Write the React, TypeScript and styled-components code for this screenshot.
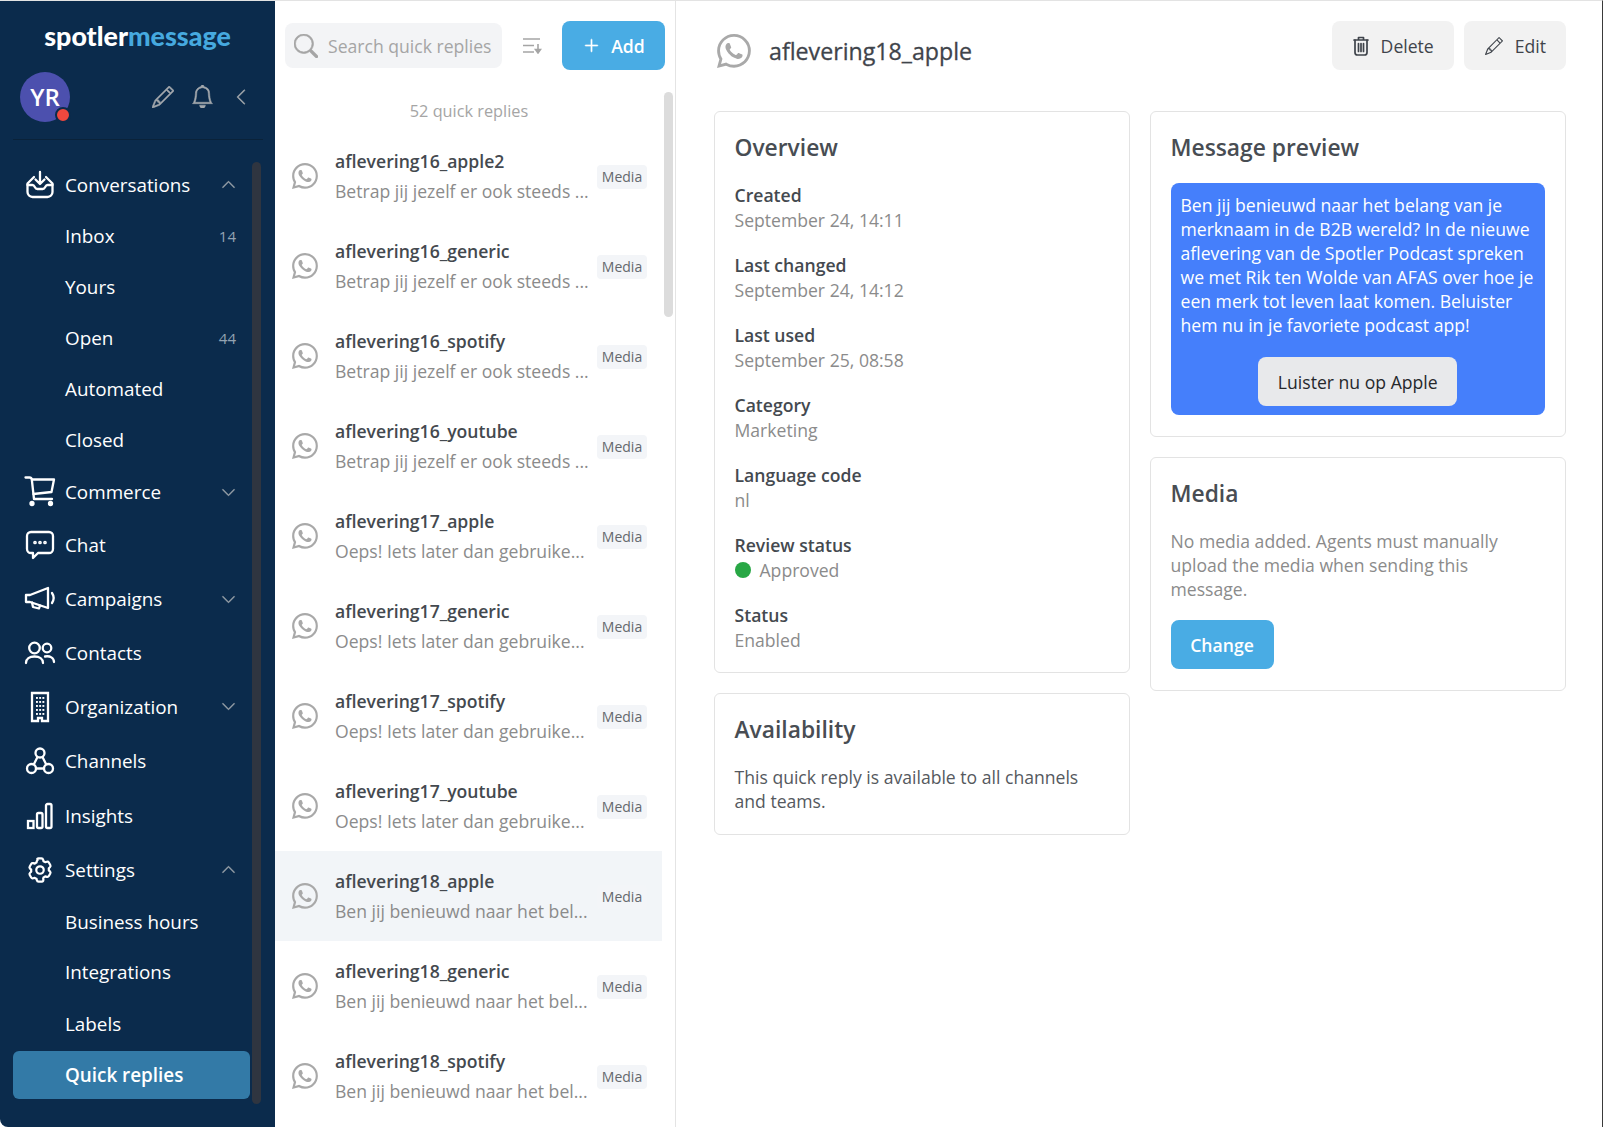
import React from "react";
import styled, { createGlobalStyle } from "styled-components";
import { BsWhatsapp, BsPencil, BsBell, BsChevronLeft, BsChevronUp, BsChevronDown, BsSearch, BsPlusLg } from "react-icons/bs";

const Global = createGlobalStyle`
  html, body { margin: 0; padding: 0; height: 100%; overflow: hidden; background: #fff; }
  body { font-family: "Open Sans", "Noto Sans", sans-serif; font-size: 17.6px; color: #3f444b; }
  * { box-sizing: border-box; }
`;

const Page = styled.div`
  display: flex; width: 1603px; height: 1127px; overflow: hidden;
  border-top: 1px solid #e3e3e3; border-right: 1px solid #3a3a3a; background: #fff;
`;
const Sidebar = styled.aside`
  width: 275px; flex: none; background: #0b2b4c; display: flex; flex-direction: column;
  border-bottom-left-radius: 8px; overflow: hidden; color: #fff;
`;
const Logo = styled.div`
  height: 57px; padding-top: 20px; text-align: center; font-family: "Lato", sans-serif;
  font-weight: 900; font-size: 26.8px; line-height: 30px; letter-spacing: 0;
`;
const LogoAccent = styled.span`color: #46a9df;`;
const UserBar = styled.div`
  display: flex; align-items: center; height: 82px; margin: 0 12px 0 13px; padding: 0 0 4px 7px;
  border-bottom: 1px solid #0a2239; color: #a3a8ad;
`;
const Avatar = styled.div`
  position: relative; width: 50px; height: 50px; border-radius: 50%; background: #4c50ae;
  display: flex; align-items: center; justify-content: center; color: #fff; font-size: 24px; font-weight: 600;
  margin-right: 82px;
`;
const Dot = styled.span`
  position: absolute; right: -1px; bottom: -1px; width: 16px; height: 16px; border-radius: 50%;
  background: #f0483e; border: 2px solid #0b2b4c;
`;
const UserIcons = styled.div`
  display: flex; align-items: center; gap: 17px;
  svg { display: block; stroke: currentColor; stroke-width: 0.35; }
`;
const Back = styled.span`display: flex; margin-left: 1px;`;
const NavArea = styled.div`display: flex; padding: 19.5px 0 0 13px; flex: 1; min-height: 0;`;
const Nav = styled.nav`width: 237px; flex: none; display: flex; flex-direction: column;`;
const Track = styled.div`
  width: 9px; margin: 2.5px 0 0 2px; height: 942px; border-radius: 5px; background: #2f3540; flex: none;
`;
const NavItem = styled.div<{ $h: number; $active?: boolean }>`
  height: ${(p) => p.$h}px; flex: none; display: flex; align-items: center; padding-left: 13px; padding-right: 14px;
  color: #fff; font-size: 18.85px; border-radius: 6px;
  background: ${(p) => (p.$active ? "#337aa7" : "transparent")};
  font-weight: ${(p) => (p.$active ? 600 : 400)};
`;
const NavIcon = styled.span`width: 28px; height: 30px; margin-right: 11px; display: flex; align-items: center; justify-content: center; flex: none; svg { display: block; overflow: visible; }`;
const SubSpacer = styled.span`width: 39px; flex: none;`;
const NavLabel = styled.span`flex: 1; white-space: nowrap;`;
const Count = styled.span`font-size: 15px; color: #93a3b2;`;
const Chevron = styled.span`color: #9aa2aa; display: flex; svg { display: block; stroke: currentColor; stroke-width: 0.5; }`;

const ListPanel = styled.section`
  position: relative; width: 401px; flex: none; border-right: 1px solid #e4e4e4; overflow: hidden;
`;
const ListTop = styled.div`display: flex; align-items: center; height: 69px; padding: 20px 0 0 10px;`;
const Search = styled.div`
  width: 217px; height: 45px; border-radius: 8px; background: #f3f4f6; display: flex; align-items: center;
  padding-left: 9px; color: #a5a5a5; white-space: nowrap;
  svg { flex: none; margin-right: 10px; stroke: currentColor; stroke-width: 0.4; }
`;
const SortBtn = styled.span`width: 60px; display: flex; justify-content: center; color: #a5a5a5; svg { display: block; }`;
const PrimaryBtn = styled.div`
  display: flex; align-items: center; justify-content: center; gap: 12px; height: 49px; border-radius: 8px;
  background: #49ace4; color: #fff; font-weight: 600; font-size: 17.6px;
`;
const AddBtn = styled(PrimaryBtn)`
  width: 103px; gap: 11px; padding-left: 1px;
  svg { stroke: currentColor; stroke-width: 0.6; }
`;
const CountLine = styled.div`text-align: center; color: #a5a5a5; font-size: 16.3px; height: 24px; line-height: 24px; margin: 29px 12px 8px 0;`;
const Row = styled.div<{ $sel?: boolean }>`
  display: flex; align-items: center; height: 90px; width: 387px; padding-left: 17px;
  background: ${(p) => (p.$sel ? "#f2f5f8" : "transparent")};
`;
const RowIcon = styled.span`width: 26px; color: #a9a9a9; margin-right: 17px; flex: none; display: flex; svg { display: block; }`;
const RowText = styled.div`width: 262px; flex: none;`;
const RowTitle = styled.div`font-weight: 600; font-size: 17.6px; line-height: 30px; color: #44494f; white-space: nowrap;`;
const RowSub = styled.div`font-size: 17.6px; line-height: 30px; color: #8b8b8b; white-space: nowrap;`;
const Badge = styled.span`
  background: #f3f5f8; border-radius: 4px; width: 50px; height: 24px; line-height: 24px; text-align: center;
  font-size: 14px; color: #64686d; flex: none; margin-top: 1px;
`;
const Thumb = styled.div`
  position: absolute; left: 389px; top: 91px; width: 9px; height: 225px; background: #dcdcdc; border-radius: 5px;
`;

const Detail = styled.main`flex: 1; min-width: 0; padding: 20px 36px 0 38px;`;
const DetailHead = styled.header`display: flex; align-items: center; height: 49px; margin-bottom: 41px;`;
const HeadIcon = styled.span`color: #a9a9a9; display: flex; margin: 10px 18px 0 3px; svg { display: block; }`;
const HeadTitle = styled.h1`
  flex: 1; margin: 0; padding-top: 10px; font-size: 23.2px; font-weight: 400; color: #3f444b;
  -webkit-text-stroke: 0.3px #3f444b;
`;
const GhostBtn = styled.div`
  display: flex; align-items: center; justify-content: center; gap: 12px; height: 49px; border-radius: 8px;
  background: #f2f2f2; color: #3f444b; margin-left: 10px; padding: 0 20px 0 21px;
  svg { display: block; }
`;
const Columns = styled.div`display: grid; grid-template-columns: 416px 416px; gap: 20px; align-items: start;`;
const Column = styled.div`display: flex; flex-direction: column; gap: 20px;`;
const Card = styled.div`border: 1.5px solid #e3e3e3; border-radius: 6px; padding: 19px 20px 20.5px 19.5px;`;
const CardTitle = styled.h2`margin: 0 0 19px; font-size: 22.8px; font-weight: 600; line-height: 33px; color: #484d53;`;
const Field = styled.div`margin-bottom: 21.5px; &:last-child { margin-bottom: 0; }`;
const Label = styled.div`font-weight: 600; line-height: 24px; margin-bottom: 0.5px; color: #44494f;`;
const Value = styled.div`line-height: 24px; color: #8b8b8b; display: flex; align-items: center;`;
const Green = styled.span`width: 16px; height: 16px; border-radius: 50%; background: #28a745; margin-right: 9px;`;
const Body = styled.p<{ $dark?: boolean }>`
  margin: 0; line-height: 24px; color: ${(p) => (p.$dark ? "#55595e" : "#8b8b8b")};
`;
const Bubble = styled.div`
  background: #457ffb; color: #fff; border-radius: 8px; padding: 10px 10px 9px; line-height: 24px;
  display: flex; flex-direction: column; align-items: center;
`;
const BubbleText = styled.div`width: 100%; margin-bottom: 20px;`;
const BubbleBtn = styled.div`
  width: 199px; height: 49px; border-radius: 8px; background: #e8e9eb; color: #26282b; display: flex;
  align-items: center; justify-content: center;
`;
const ChangeBtn = styled(PrimaryBtn)`width: 103px; margin-top: 19.5px;`;

const S = { fill: "none", stroke: "currentColor", strokeWidth: 2.3, strokeLinecap: "round" as const, strokeLinejoin: "round" as const };

const InboxIcon = () => (
  <svg width="28" height="28" viewBox="0 0 28 28" {...S}>
    <path d="M14 1v12M9.5 8.5 14 13l4.5-4.5" />
    <path d="M8 6 1.5 12.5V21a5 5 0 0 0 5 5h15a5 5 0 0 0 5-5v-8.5L20 6" />
    <path d="M1.5 14h5c1.3 0 1.8 1 2.3 2s1.2 2 2.5 2h5.4c1.3 0 2-1 2.5-2s1-2 2.3-2h5" />
  </svg>
);
const CartIcon = () => (
  <svg width="30" height="30" viewBox="0 0 30 30" {...S}>
    <path d="M0.5 0.5h4q2 0 2.3 2L9 22h18" />
    <path d="M7 2.5h22l-2.5 12.5L8.5 17" />
    <circle cx="7" cy="26.5" r="1.5" fill="currentColor" />
    <circle cx="25.5" cy="26.5" r="1.5" fill="currentColor" />
  </svg>
);
const ChatIcon = () => (
  <svg width="28" height="28" viewBox="0 0 28 28" {...S}>
    <path d="M5 1h18a4 4 0 0 1 4 4v13a4 4 0 0 1-4 4H12l-5 5v-5H5a4 4 0 0 1-4-4V5a4 4 0 0 1 4-4Z" />
    <circle cx="9" cy="11.5" r=".7" fill="currentColor" />
    <circle cx="14" cy="11.5" r=".7" fill="currentColor" />
    <circle cx="19" cy="11.5" r=".7" fill="currentColor" />
  </svg>
);
const MegaIcon = () => (
  <svg width="30" height="24" viewBox="0 0 30 24" {...S}>
    <path d="M1 8h4L23 1v20L5 15H1V8Z" />
    <path d="M7 15.5 8 20l6 1.5 1-3" />
    <path d="M27 6c2 3 2 7 0 10" />
  </svg>
);
const ContactsIcon = () => (
  <svg width="30" height="24" viewBox="0 0 30 24" {...S}>
    <circle cx="9.5" cy="7" r="5.3" />
    <circle cx="22" cy="7" r="4.3" />
    <path d="M1 22c0-4 3.5-6.5 8.5-6.5s8.5 2.5 8.5 6.5" />
    <path d="M20 15.5c5 -1 9 1.5 9 5.5" />
  </svg>
);
const BuildingIcon = () => (
  <svg width="18" height="30" viewBox="0 0 18 30" {...S} strokeLinejoin="miter">
    <path d="M1 1h16v28H11v-3H7v3H1V1Z" />
    <g stroke="none" fill="currentColor">
      {[5, 8.2, 11.4].map((x) => [5, 9, 13, 17, 21].map((y) => <rect key={`${x}-${y}`} x={x} y={y} width="1.9" height="1.9" />))}
    </g>
  </svg>
);
const ChannelsIcon = () => (
  <svg width="28" height="28" viewBox="0 0 28 28" {...S}>
    <circle cx="14" cy="6" r="4.5" />
    <circle cx="5.5" cy="21.5" r="4.5" />
    <circle cx="22.5" cy="21.5" r="4.5" />
    <path d="M11.5 10 8 17M16.5 10 20 17M10 21.5h8" />
  </svg>
);
const InsightsIcon = () => (
  <svg width="26" height="26" viewBox="0 0 26 26" {...S} strokeLinejoin="miter">
    <rect x="1" y="18" width="5.5" height="7" />
    <rect x="10" y="10" width="5.5" height="15" rx="1.5" />
    <rect x="19" y="1" width="5.5" height="24" rx="1.5" />
  </svg>
);
const GearIcon = () => (
  <svg width="28" height="28" viewBox="0 0 24 24" {...S} strokeWidth={1.9}>
    <path d="M9.67 2.35a1.5 1.5 0 0 1 1.1-.35h2.46a1.5 1.5 0 0 1 1.46 1.14l.3 1.3c.55.24 1.07.54 1.54.9l1.28-.4a1.5 1.5 0 0 1 1.76.68l1.23 2.14a1.5 1.5 0 0 1-.29 1.85l-.98.9a7 7 0 0 1 0 1.8l.98.9a1.5 1.5 0 0 1 .29 1.85l-1.23 2.14a1.5 1.5 0 0 1-1.76.68l-1.28-.4c-.47.36-.99.66-1.54.9l-.3 1.3A1.5 1.5 0 0 1 13.23 22h-2.46a1.5 1.5 0 0 1-1.46-1.14l-.3-1.3a7 7 0 0 1-1.54-.9l-1.28.4a1.5 1.5 0 0 1-1.76-.68L3.2 16.24a1.5 1.5 0 0 1 .29-1.85l.98-.9a7 7 0 0 1 0-1.8l-.98-.9a1.5 1.5 0 0 1-.29-1.85l1.23-2.14a1.5 1.5 0 0 1 1.76-.68l1.28.4c.47-.36.99-.66 1.54-.9l.3-1.3c.08-.3.3-.6.6-.78Z" />
    <circle cx="12" cy="12" r="3.2" />
  </svg>
);
const SortIcon = () => (
  <svg width="19" height="16" viewBox="0 0 19 16" fill="none" stroke="currentColor" strokeWidth="1.6">
    <path d="M0 1h17M0 7.5h11M0 14h11M15 6v8" />
    <path d="M12.5 11.5h5L15 15Z" fill="currentColor" />
  </svg>
);
const TrashIcon = () => (
  <svg width="16" height="20" viewBox="0 0 16 20" fill="none" stroke="currentColor" strokeWidth="1.7" strokeLinecap="round" strokeLinejoin="round">
    <path d="M1 4h14M5.5 4V1.5h5V4" />
    <path d="M2 4v12.5A2.5 2.5 0 0 0 4.5 19h7a2.5 2.5 0 0 0 2.5-2.5V4" />
    <path d="M5.5 7.5V15.5M8 7.5V15.5M10.5 7.5V15.5" />
  </svg>
);

type NavEntry = { label: string; h: number; icon?: React.ReactNode; count?: string; chev?: "up" | "down"; active?: boolean };
const navItems: NavEntry[] = [
  { label: "Conversations", h: 50.5, icon: <InboxIcon />, chev: "up" },
  { label: "Inbox", h: 51.5, count: "14" },
  { label: "Yours", h: 51.5 },
  { label: "Open", h: 50.5, count: "44" },
  { label: "Automated", h: 51 },
  { label: "Closed", h: 51.6 },
  { label: "Commerce", h: 52.4, icon: <CartIcon />, chev: "down" },
  { label: "Chat", h: 54, icon: <ChatIcon /> },
  { label: "Campaigns", h: 54, icon: <MegaIcon />, chev: "down" },
  { label: "Contacts", h: 53.7, icon: <ContactsIcon /> },
  { label: "Organization", h: 53.3, icon: <BuildingIcon />, chev: "down" },
  { label: "Channels", h: 55, icon: <ChannelsIcon /> },
  { label: "Insights", h: 55.5, icon: <InsightsIcon /> },
  { label: "Settings", h: 52, icon: <GearIcon />, chev: "up" },
  { label: "Business hours", h: 51.5 },
  { label: "Integrations", h: 50 },
  { label: "Labels", h: 53.5 },
  { label: "Quick replies", h: 48, active: true },
];

const B16 = "Betrap jij jezelf er ook steeds ...";
const O17 = "Oeps! Iets later dan gebruike...";
const B18 = "Ben jij benieuwd naar het bel...";
const rows = [
  ["aflevering16_apple2", B16], ["aflevering16_generic", B16], ["aflevering16_spotify", B16], ["aflevering16_youtube", B16],
  ["aflevering17_apple", O17], ["aflevering17_generic", O17], ["aflevering17_spotify", O17], ["aflevering17_youtube", O17],
  ["aflevering18_apple", B18], ["aflevering18_generic", B18], ["aflevering18_spotify", B18],
];
const fields: [string, string, boolean?][] = [
  ["Created", "September 24, 14:11"], ["Last changed", "September 24, 14:12"], ["Last used", "September 25, 08:58"],
  ["Category", "Marketing"], ["Language code", "nl"], ["Review status", "Approved", true], ["Status", "Enabled"],
];

export default function App() {
  return (
    <Page>
      <Global />
      <Sidebar>
        <Logo>spotler<LogoAccent>message</LogoAccent></Logo>
        <UserBar>
          <Avatar>YR<Dot /></Avatar>
          <UserIcons>
            <BsPencil size={22} />
            <BsBell size={23} />
            <Back><BsChevronLeft size={18} /></Back>
          </UserIcons>
        </UserBar>
        <NavArea>
          <Nav>
            {navItems.map((n) => (
              <NavItem key={n.label} $h={n.h} $active={n.active}>
                {n.icon ? <NavIcon>{n.icon}</NavIcon> : <SubSpacer />}
                <NavLabel>{n.label}</NavLabel>
                {n.count && <Count>{n.count}</Count>}
                {n.chev && <Chevron>{n.chev === "up" ? <BsChevronUp size={15} /> : <BsChevronDown size={15} />}</Chevron>}
              </NavItem>
            ))}
          </Nav>
          <Track />
        </NavArea>
      </Sidebar>
      <ListPanel>
        <ListTop>
          <Search><BsSearch size={24} />Search quick replies</Search>
          <SortBtn><SortIcon /></SortBtn>
          <AddBtn><BsPlusLg size={17} />Add</AddBtn>
        </ListTop>
        <CountLine>52 quick replies</CountLine>
        {rows.map(([t, s], i) => (
          <Row key={t} $sel={i === 8}>
            <RowIcon><BsWhatsapp size={26} /></RowIcon>
            <RowText>
              <RowTitle>{t}</RowTitle>
              <RowSub>{s}</RowSub>
            </RowText>
            <Badge>Media</Badge>
          </Row>
        ))}
        <Thumb />
      </ListPanel>
      <Detail>
        <DetailHead>
          <HeadIcon><BsWhatsapp size={34} /></HeadIcon>
          <HeadTitle>aflevering18_apple</HeadTitle>
          <GhostBtn><TrashIcon />Delete</GhostBtn>
          <GhostBtn><BsPencil size={18} />Edit</GhostBtn>
        </DetailHead>
        <Columns>
          <Column>
            <Card>
              <CardTitle>Overview</CardTitle>
              {fields.map(([l, v, g]) => (
                <Field key={l}>
                  <Label>{l}</Label>
                  <Value>{g && <Green />}{v}</Value>
                </Field>
              ))}
            </Card>
            <Card>
              <CardTitle>Availability</CardTitle>
              <Body $dark>This quick reply is available to all channels and teams.</Body>
            </Card>
          </Column>
          <Column>
            <Card>
              <CardTitle>Message preview</CardTitle>
              <Bubble>
                <BubbleText>Ben jij benieuwd naar het belang van je merknaam in de B2B wereld? In de nieuwe aflevering van de Spotler Podcast spreken we met Rik ten Wolde van AFAS over hoe je een merk tot leven laat komen. Beluister hem nu in je favoriete podcast app!</BubbleText>
                <BubbleBtn>Luister nu op Apple</BubbleBtn>
              </Bubble>
            </Card>
            <Card>
              <CardTitle>Media</CardTitle>
              <Body>No media added. Agents must manually upload the media when sending this message.</Body>
              <ChangeBtn>Change</ChangeBtn>
            </Card>
          </Column>
        </Columns>
      </Detail>
    </Page>
  );
}
